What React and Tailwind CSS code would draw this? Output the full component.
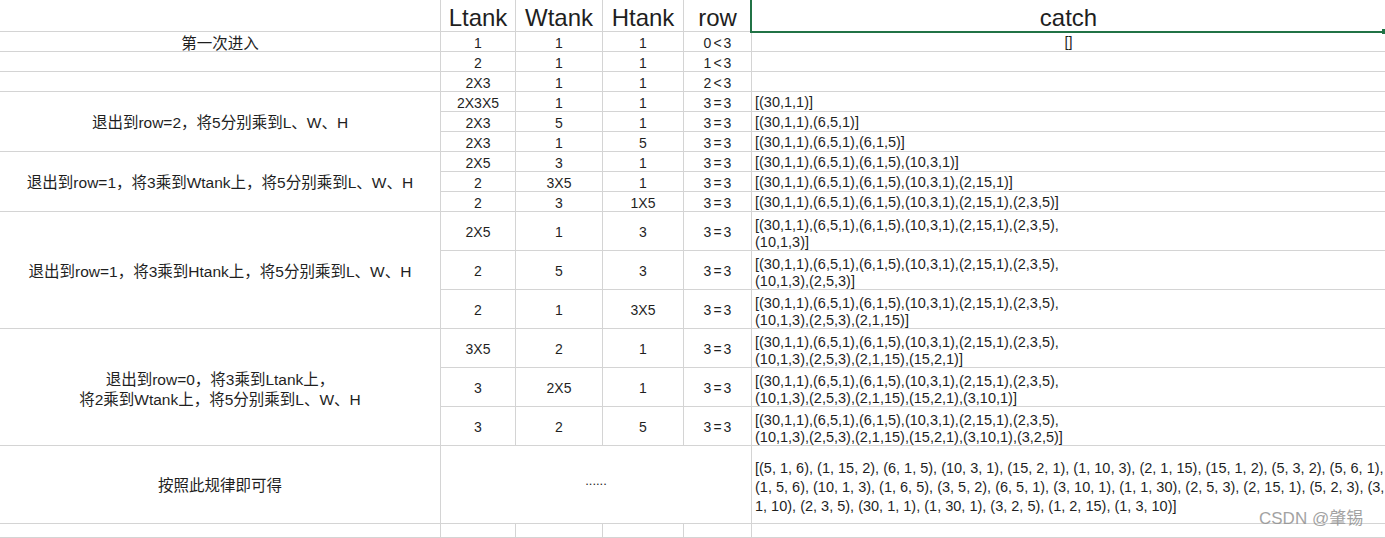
import React from "react";
import clsx from "clsx";

const FONT = "font-['Liberation_Sans','Noto_Sans_CJK_SC',sans-serif]";

const rows = [
  { l: "1", w: "1", h: "1", r: "0<3", c: ["[]"], center: true },
  { l: "2", w: "1", h: "1", r: "1<3", c: [] },
  { l: "2X3", w: "1", h: "1", r: "2<3", c: [] },
  { l: "2X3X5", w: "1", h: "1", r: "3=3", c: ["[(30,1,1)]"] },
  { l: "2X3", w: "5", h: "1", r: "3=3", c: ["[(30,1,1),(6,5,1)]"] },
  { l: "2X3", w: "1", h: "5", r: "3=3", c: ["[(30,1,1),(6,5,1),(6,1,5)]"] },
  { l: "2X5", w: "3", h: "1", r: "3=3", c: ["[(30,1,1),(6,5,1),(6,1,5),(10,3,1)]"] },
  { l: "2", w: "3X5", h: "1", r: "3=3", c: ["[(30,1,1),(6,5,1),(6,1,5),(10,3,1),(2,15,1)]"] },
  { l: "2", w: "3", h: "1X5", r: "3=3", c: ["[(30,1,1),(6,5,1),(6,1,5),(10,3,1),(2,15,1),(2,3,5)]"] },
  { l: "2X5", w: "1", h: "3", r: "3=3", c: ["[(30,1,1),(6,5,1),(6,1,5),(10,3,1),(2,15,1),(2,3,5),", "(10,1,3)]"] },
  { l: "2", w: "5", h: "3", r: "3=3", c: ["[(30,1,1),(6,5,1),(6,1,5),(10,3,1),(2,15,1),(2,3,5),", "(10,1,3),(2,5,3)]"] },
  { l: "2", w: "1", h: "3X5", r: "3=3", c: ["[(30,1,1),(6,5,1),(6,1,5),(10,3,1),(2,15,1),(2,3,5),", "(10,1,3),(2,5,3),(2,1,15)]"] },
  { l: "3X5", w: "2", h: "1", r: "3=3", c: ["[(30,1,1),(6,5,1),(6,1,5),(10,3,1),(2,15,1),(2,3,5),", "(10,1,3),(2,5,3),(2,1,15),(15,2,1)]"] },
  { l: "3", w: "2X5", h: "1", r: "3=3", c: ["[(30,1,1),(6,5,1),(6,1,5),(10,3,1),(2,15,1),(2,3,5),", "(10,1,3),(2,5,3),(2,1,15),(15,2,1),(3,10,1)]"] },
  { l: "3", w: "2", h: "5", r: "3=3", c: ["[(30,1,1),(6,5,1),(6,1,5),(10,3,1),(2,15,1),(2,3,5),", "(10,1,3),(2,5,3),(2,1,15),(15,2,1),(3,10,1),(3,2,5)]"] },
];

// left column: text per starting row, with row span
const groups = {
  0: { span: 1, lines: ["第一次进入"] },
  1: { span: 1, lines: [] },
  2: { span: 1, lines: [] },
  3: { span: 3, lines: ["退出到row=2，将5分别乘到L、W、H"] },
  6: { span: 3, lines: ["退出到row=1，将3乘到Wtank上，将5分别乘到L、W、H"] },
  9: { span: 3, lines: ["退出到row=1，将3乘到Htank上，将5分别乘到L、W、H"] },
  12: { span: 3, lines: ["退出到row=0，将3乘到Ltank上，", "将2乘到Wtank上，将5分别乘到L、W、H"] },
};

const finalList = [
  "[(5, 1, 6), (1, 15, 2), (6, 1, 5), (10, 3, 1), (15, 2, 1), (1, 10, 3), (2, 1, 15), (15, 1, 2), (5, 3, 2), (5, 6, 1),",
  "(1, 5, 6), (10, 1, 3), (1, 6, 5), (3, 5, 2), (6, 5, 1), (3, 10, 1), (1, 1, 30), (2, 5, 3), (2, 15, 1), (5, 2, 3), (3,",
  "1, 10), (2, 3, 5), (30, 1, 1), (1, 30, 1), (3, 2, 5), (1, 2, 15), (1, 3, 10)]",
];

function Cell({ className, children, last }) {
  return (
    <div className={clsx("border-b border-[#d4d4d4] text-[#1f1f1f]", !last && "border-r", className)}>
      {children}
    </div>
  );
}

function Num({ children }) {
  return (
    <Cell className="flex items-center justify-center pt-[3px] text-[14px] leading-[17px] whitespace-nowrap">
      {children}
    </Cell>
  );
}

function Compare({ value }) {
  const m = value.match(/^(\d)([<=])(\d)$/);
  return (
    <Num>
      {m[1]}
      <span className="mx-[2px]">{m[2]}</span>
      {m[3]}
    </Num>
  );
}

function Header({ children, last }) {
  return (
    <Cell last={last} className="pt-[4px] text-center text-[24px] leading-[28px]">
      {children}
    </Cell>
  );
}

export default function App() {
  return (
    <div className={clsx("relative w-[1385px] h-[538px] overflow-hidden bg-white", FONT)}>
      <div className="grid grid-cols-[441px_75px_87px_81px_68px_633px] grid-rows-[32px_repeat(9,20px)_repeat(6,39px)_78px_14px]">
        <Cell />
        <Header>Ltank</Header>
        <Header>Wtank</Header>
        <Header>Htank</Header>
        <Header>row</Header>
        <Header last>catch</Header>

        {rows.map((r, i) => {
          const g = groups[i];
          return (
            <React.Fragment key={i}>
              {g && (
                <Cell
                  className={clsx(
                    "flex flex-col items-center justify-center text-[15.5px] whitespace-nowrap",
                    g.span === 3 ? "row-span-3" : "pt-[3px] leading-[17px]",
                    g.lines.length > 1 ? "pt-[5px] leading-[20px]" : g.span === 3 && "pt-[3px] leading-[20px]"
                  )}
                >
                  {g.lines.map((t, k) => (
                    <div key={k}>{t}</div>
                  ))}
                </Cell>
              )}
              <Num>{r.l}</Num>
              <Num>{r.w}</Num>
              <Num>{r.h}</Num>
              <Compare value={r.r} />
              <Cell
                last
                className={clsx(
                  "text-[14.5px] leading-[17px] whitespace-nowrap",
                  r.c.length > 1 ? "pt-[5px] pl-[3px]" : "pt-[2px]",
                  r.center ? "text-center" : "pl-[3px]"
                )}
              >
                {r.c.map((t, k) => (
                  <div key={k}>{t}</div>
                ))}
              </Cell>
            </React.Fragment>
          );
        })}

        <Cell className="flex items-center justify-center pt-[3px] text-[15.5px]">按照此规律即可得</Cell>
        <Cell className="col-span-4 flex items-center justify-center pb-[8px] text-[13px] leading-[17px]">......</Cell>
        <Cell last className="flex flex-col justify-center pt-[6px] pl-[3px] text-[14.5px] leading-[19px] whitespace-nowrap">
          {finalList.map((t, k) => (
            <div key={k}>{t}</div>
          ))}
        </Cell>

        <Cell />
        <Cell />
        <Cell />
        <Cell />
        <Cell />
        <Cell last />
      </div>

      {/* selected cell outline */}
      <div className="absolute left-[750px] top-0 h-[33px] w-[633px] border-b-2 border-l-2 border-[#217346]" />
      <div className="absolute left-[1382px] top-[29px] h-[5px] w-[4px] bg-[#217346]" />

      {/* watermark */}
      <div className="absolute left-[1259px] top-[509px] text-[17px] leading-[20px] text-[#8c8c8c] opacity-80">
        CSDN @肇锡
      </div>
    </div>
  );
}
